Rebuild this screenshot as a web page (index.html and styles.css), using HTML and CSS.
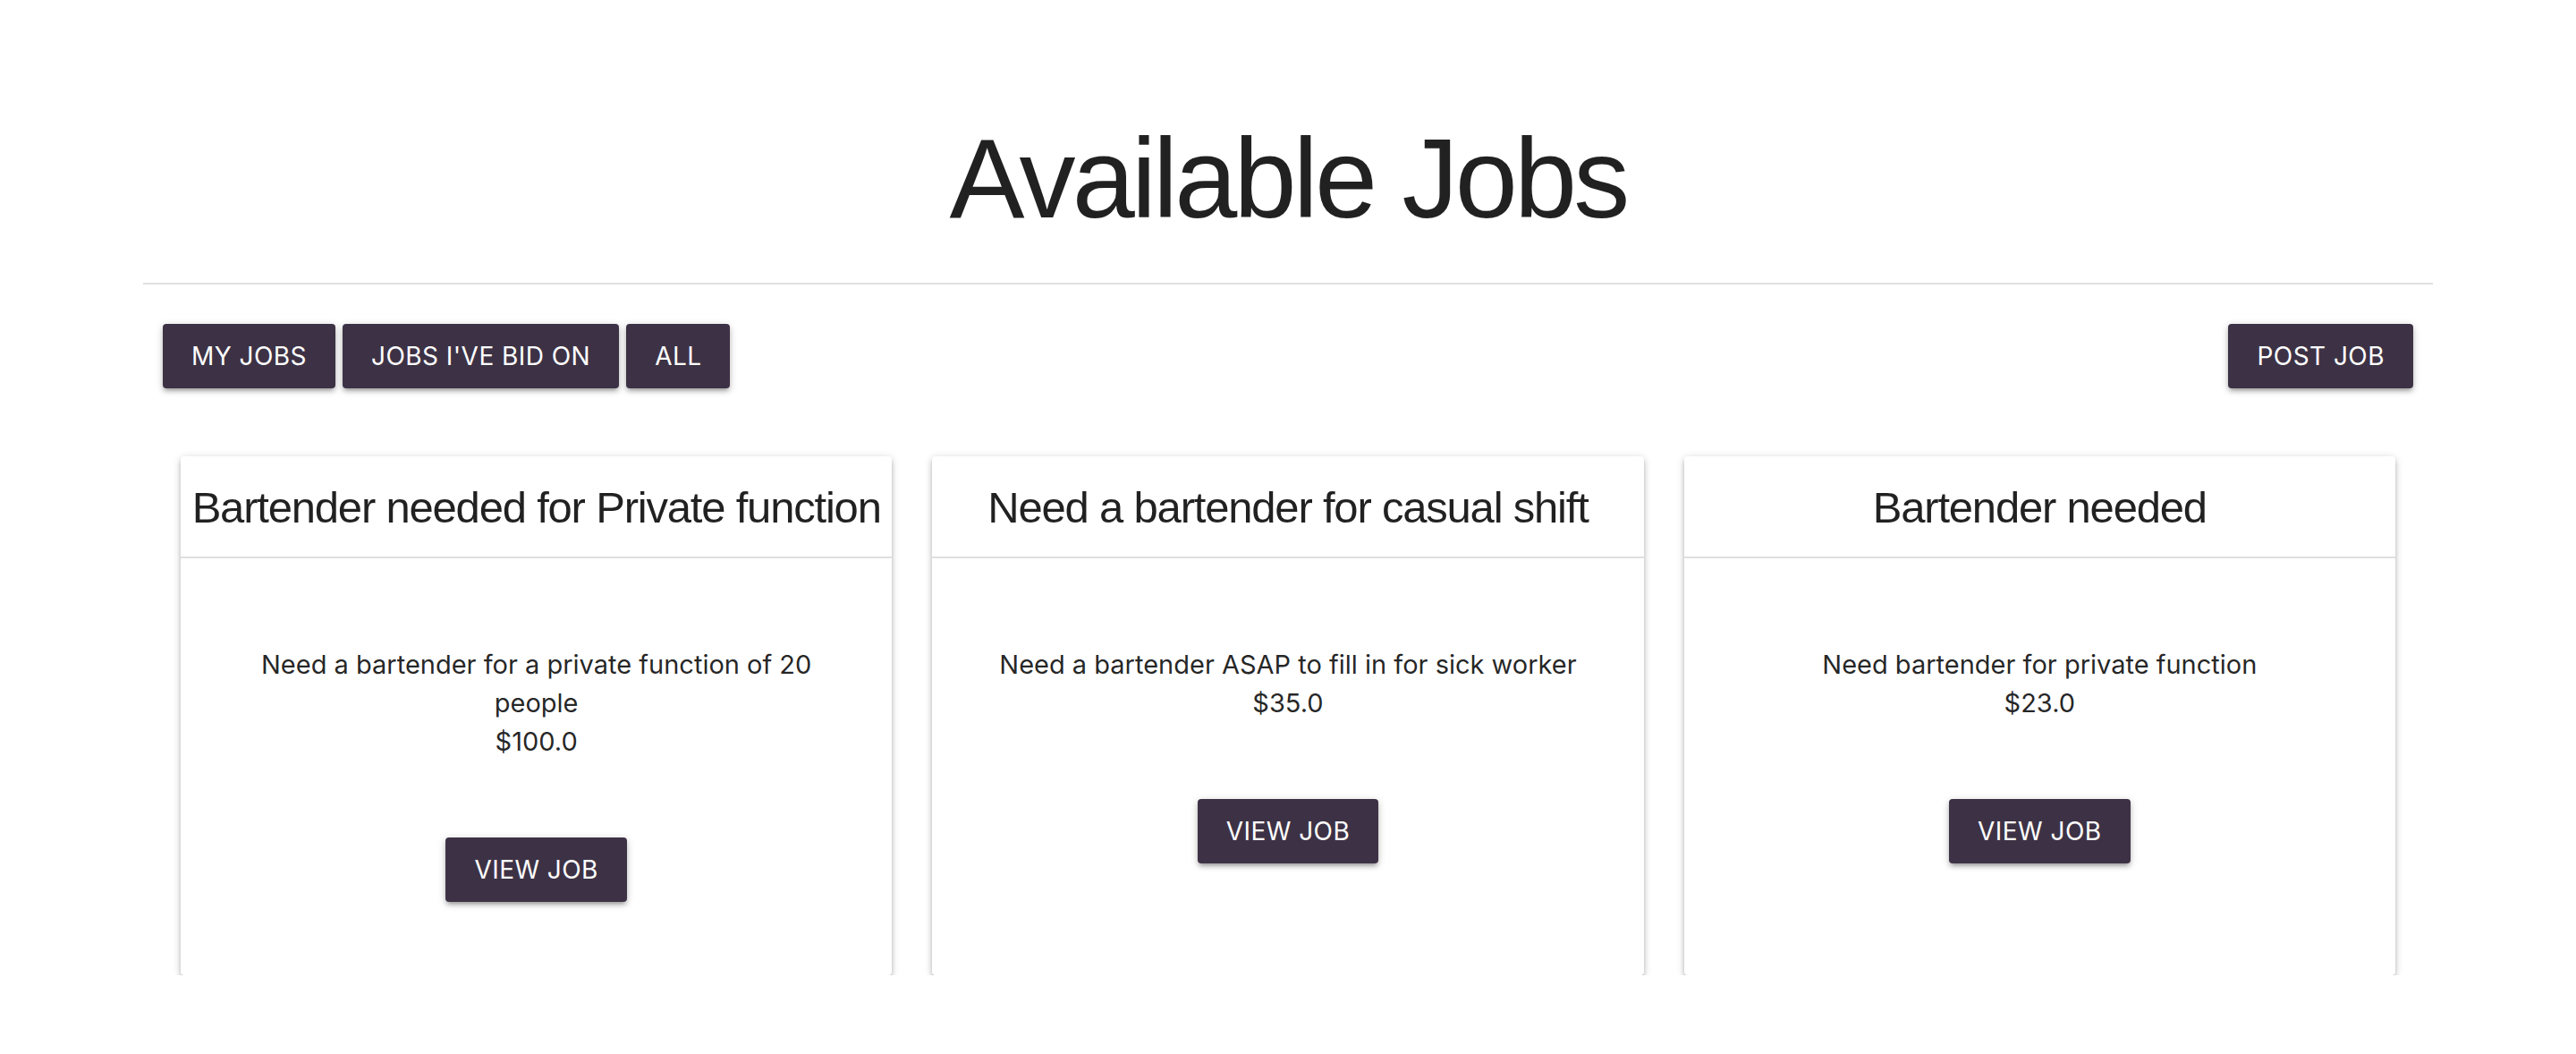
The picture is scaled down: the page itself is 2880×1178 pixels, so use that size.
FILE: index.html
```
<!DOCTYPE html>
<html lang="en">
<head>
<meta charset="utf-8">
<title>Available Jobs</title>
<link rel="stylesheet" href="styles.css">
</head>
<body>
<main class="page">
  <h1 class="title">Available Jobs</h1>
  <hr class="divider">
  <div class="toolbar">
    <div class="filters">
      <button class="btn">My Jobs</button>
      <button class="btn">Jobs I've bid on</button>
      <button class="btn">All</button>
    </div>
    <button class="btn">Post Job</button>
  </div>
  <div class="cards">
    <article class="card">
      <h5 class="card-title">Bartender needed for Private function</h5>
      <div class="card-body">
        <p class="desc">Need a bartender for a private function of 20 people</p>
        <p class="price">$100.0</p>
        <button class="btn">View Job</button>
      </div>
    </article>
    <article class="card">
      <h5 class="card-title">Need a bartender for casual shift</h5>
      <div class="card-body">
        <p class="desc">Need a bartender ASAP to fill in for sick worker</p>
        <p class="price">$35.0</p>
        <button class="btn">View Job</button>
      </div>
    </article>
    <article class="card">
      <h5 class="card-title">Bartender needed</h5>
      <div class="card-body">
        <p class="desc">Need bartender for private function</p>
        <p class="price">$23.0</p>
        <button class="btn">View Job</button>
      </div>
    </article>
  </div>
</main>
</body>
</html>
```
FILE: styles.css
```
html, body {
  margin: 0;
  padding: 0;
  background: #ffffff;
}

body {
  font-family: Inter, "Noto Sans", sans-serif;
  color: rgba(0, 0, 0, 0.87);
}

.page {
  width: 2560px;
  margin: 0 auto;
}

.title {
  margin: 131px 0 0;
  font-family: "Liberation Sans", Arial, sans-serif;
  font-weight: 400;
  font-size: 126px;
  line-height: 138.6px;
  letter-spacing: -3.8px;
  text-align: center;
  color: rgba(0, 0, 0, 0.87);
}

.divider {
  margin: 46px 0 0;
  border: 0;
  height: 2px;
  background: #e0e0e0;
}

.toolbar {
  display: flex;
  justify-content: space-between;
  align-items: center;
  padding: 0 22px;
  margin-top: 44px;
}

.filters {
  display: flex;
  gap: 8px;
}

.btn {
  display: inline-block;
  height: 72px;
  line-height: 72px;
  padding: 0 32px;
  border: 0;
  border-radius: 4px;
  background: #3d3245;
  color: #ffffff;
  font-family: Inter, "Noto Sans", sans-serif;
  font-size: 28px;
  font-weight: 400;
  letter-spacing: 0.45px;
  text-transform: uppercase;
  box-shadow: 0 4px 4px 0 rgba(0, 0, 0, 0.14), 0 6px 2px -4px rgba(0, 0, 0, 0.12), 0 2px 10px 0 rgba(0, 0, 0, 0.2);
  cursor: pointer;
}

.cards {
  display: grid;
  grid-template-columns: repeat(3, 1fr);
  gap: 45px;
  padding: 0 42px;
  margin-top: 76px;
}

.card {
  background: #ffffff;
  border-radius: 4px;
  box-shadow: 0 4px 4px 0 rgba(0, 0, 0, 0.16), 0 6px 2px -4px rgba(0, 0, 0, 0.14), 0 2px 10px 0 rgba(0, 0, 0, 0.2);
  text-align: center;
}

.card-title {
  margin: 0;
  padding: 30px 0 28px;
  border-bottom: 2px solid #e0e0e0;
  font-family: "Liberation Sans", Arial, sans-serif;
  font-weight: 400;
  font-size: 49px;
  line-height: 54px;
  letter-spacing: -1.2px;
  white-space: nowrap;
  color: rgba(0, 0, 0, 0.87);
}

.card-body {
  padding: 97px 58px 82px;
}

.desc {
  margin: 0;
  font-size: 29px;
  line-height: 43px;
}

.price {
  margin: 0 0 86px;
  font-size: 29px;
  line-height: 43px;
}
```
